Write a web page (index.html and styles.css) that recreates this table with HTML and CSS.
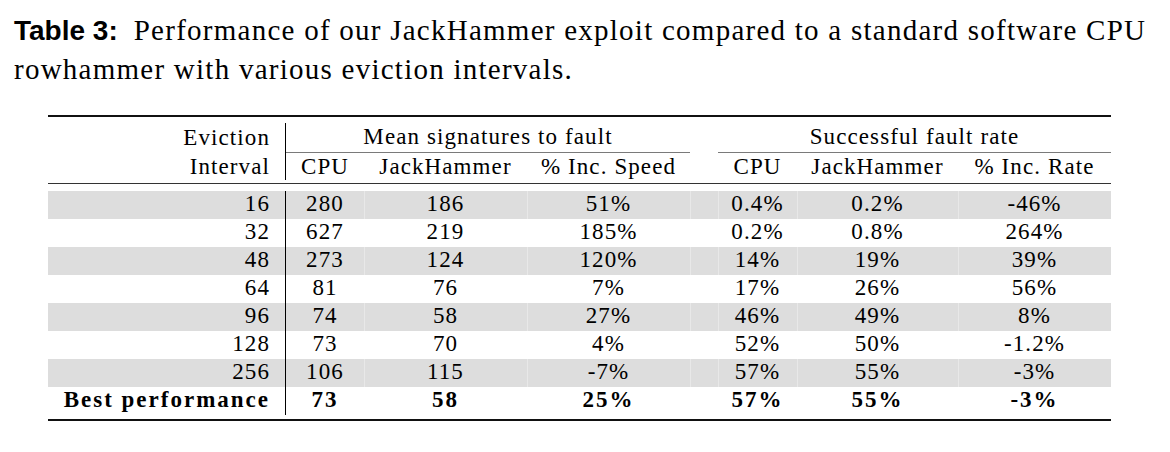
FILE: index.html
```html
<!DOCTYPE html>
<html>
<head>
<meta charset="utf-8">
<link rel="stylesheet" href="styles.css">
</head>
<body>
<p class="caption"><b class="label">Table 3:</b><span class="ctext">Performance of our JackHammer exploit compared to a standard software CPU</span> <span class="ctext">rowhammer with various eviction intervals.</span></p>
<table class="tbl">
  <colgroup>
    <col class="c0"><col class="c1"><col class="c2"><col class="c3"><col class="cg"><col class="c4"><col class="c5"><col class="c6">
  </colgroup>
  <tr class="rule-top"><td colspan="8"></td></tr>
  <tr class="gap6"><td colspan="8"></td></tr>
  <tr class="h1">
    <td class="first">Eviction</td>
    <td colspan="3" class="grp">Mean signatures to fault</td>
    <td></td>
    <td colspan="3" class="grp">Successful fault rate</td>
  </tr>
  <tr class="h2">
    <td class="first">Interval</td>
    <td>CPU</td><td>JackHammer</td><td>% Inc. Speed</td>
    <td></td>
    <td>CPU</td><td>JackHammer</td><td>% Inc. Rate</td>
  </tr>
  <tr class="gap3"><td colspan="8"></td></tr>
  <tr class="rule-mid"><td colspan="8"></td></tr>
  <tr class="gap7"><td colspan="8"></td></tr>
  <tr class="row stripe"><td class="first">16</td><td>280</td><td class="sep">186</td><td class="sep">51%</td><td class="sep"></td><td class="sep">0.4%</td><td class="sep">0.2%</td><td class="sep">-46%</td></tr>
  <tr class="row"><td class="first">32</td><td>627</td><td>219</td><td>185%</td><td></td><td>0.2%</td><td>0.8%</td><td>264%</td></tr>
  <tr class="row stripe"><td class="first">48</td><td>273</td><td class="sep">124</td><td class="sep">120%</td><td class="sep"></td><td class="sep">14%</td><td class="sep">19%</td><td class="sep">39%</td></tr>
  <tr class="row"><td class="first">64</td><td>81</td><td>76</td><td>7%</td><td></td><td>17%</td><td>26%</td><td>56%</td></tr>
  <tr class="row stripe"><td class="first">96</td><td>74</td><td class="sep">58</td><td class="sep">27%</td><td class="sep"></td><td class="sep">46%</td><td class="sep">49%</td><td class="sep">8%</td></tr>
  <tr class="row"><td class="first">128</td><td>73</td><td>70</td><td>4%</td><td></td><td>52%</td><td>50%</td><td>-1.2%</td></tr>
  <tr class="row stripe"><td class="first">256</td><td>106</td><td class="sep">115</td><td class="sep">-7%</td><td class="sep"></td><td class="sep">57%</td><td class="sep">55%</td><td class="sep">-3%</td></tr>
  <tr class="row best"><td class="first">Best performance</td><td>73</td><td>58</td><td>25%</td><td></td><td>57%</td><td>55%</td><td>-3%</td></tr>
  <tr class="gap4"><td colspan="8"></td></tr>
  <tr class="rule-top"><td colspan="8"></td></tr>
</table>
</body>
</html>
```

FILE: styles.css
```css
html, body {
  margin: 0;
  padding: 0;
  background: #ffffff;
  color: #000000;
}
body {
  font-family: "Liberation Serif", "Times New Roman", serif;
}
.caption {
  margin: 0;
  padding: 11px 10px 0 14px;
  font-size: 29px;
  line-height: 38px;
}
.caption .label {
  font-family: "Liberation Sans", Arial, sans-serif;
  font-weight: bold;
  font-size: 28px;
  margin-right: 16px;
}
.caption .ctext {
  letter-spacing: 1.25px;
}
.tbl {
  margin: 27px 0 0 48px;
  width: 1063px;
  table-layout: fixed;
  border-collapse: separate;
  border-spacing: 0;
  font-size: 23px;
  letter-spacing: 1.1px;
}
.c0 { width: 238px; }
.c1 { width: 78px; }
.c2 { width: 163px; }
.c3 { width: 163px; }
.cg { width: 28px; }
.c4 { width: 79px; }
.c5 { width: 161px; }
.c6 { width: 153px; }
.tbl td {
  padding: 0;
  text-align: center;
  white-space: nowrap;
}
.tbl td.first {
  text-align: right;
  padding-right: 15px;
  border-right: 1px solid #000;
}
.rule-top td { height: 2px; background: #111; line-height: 0; font-size: 0; }
.rule-mid td { height: 1px; background: #333; line-height: 0; font-size: 0; }
.gap6 td { height: 6px; line-height: 0; font-size: 0; }
.gap3 td { height: 3px; line-height: 0; font-size: 0; }
.gap7 td { height: 7px; line-height: 0; font-size: 0; }
.gap4 td { height: 4px; line-height: 0; font-size: 0; }
.h1 td {
  height: 29px;
  line-height: 27px;
  padding-bottom: 2px;
  box-sizing: border-box;
}
.h1 td.grp {
  border-bottom: 1px solid #7a7a7a;
}
.h2 td {
  height: 27px;
  line-height: 27px;
}
.row td {
  height: 28px;
  line-height: 26px;
  padding-bottom: 2px;
  box-sizing: border-box;
}
.row.stripe td {
  background: #dddddd;
}
.row.stripe td.sep {
  box-shadow: inset 1px 0 0 #e8e8e8;
}
.row.best td {
  font-weight: bold;
  letter-spacing: 2px;
}
```
